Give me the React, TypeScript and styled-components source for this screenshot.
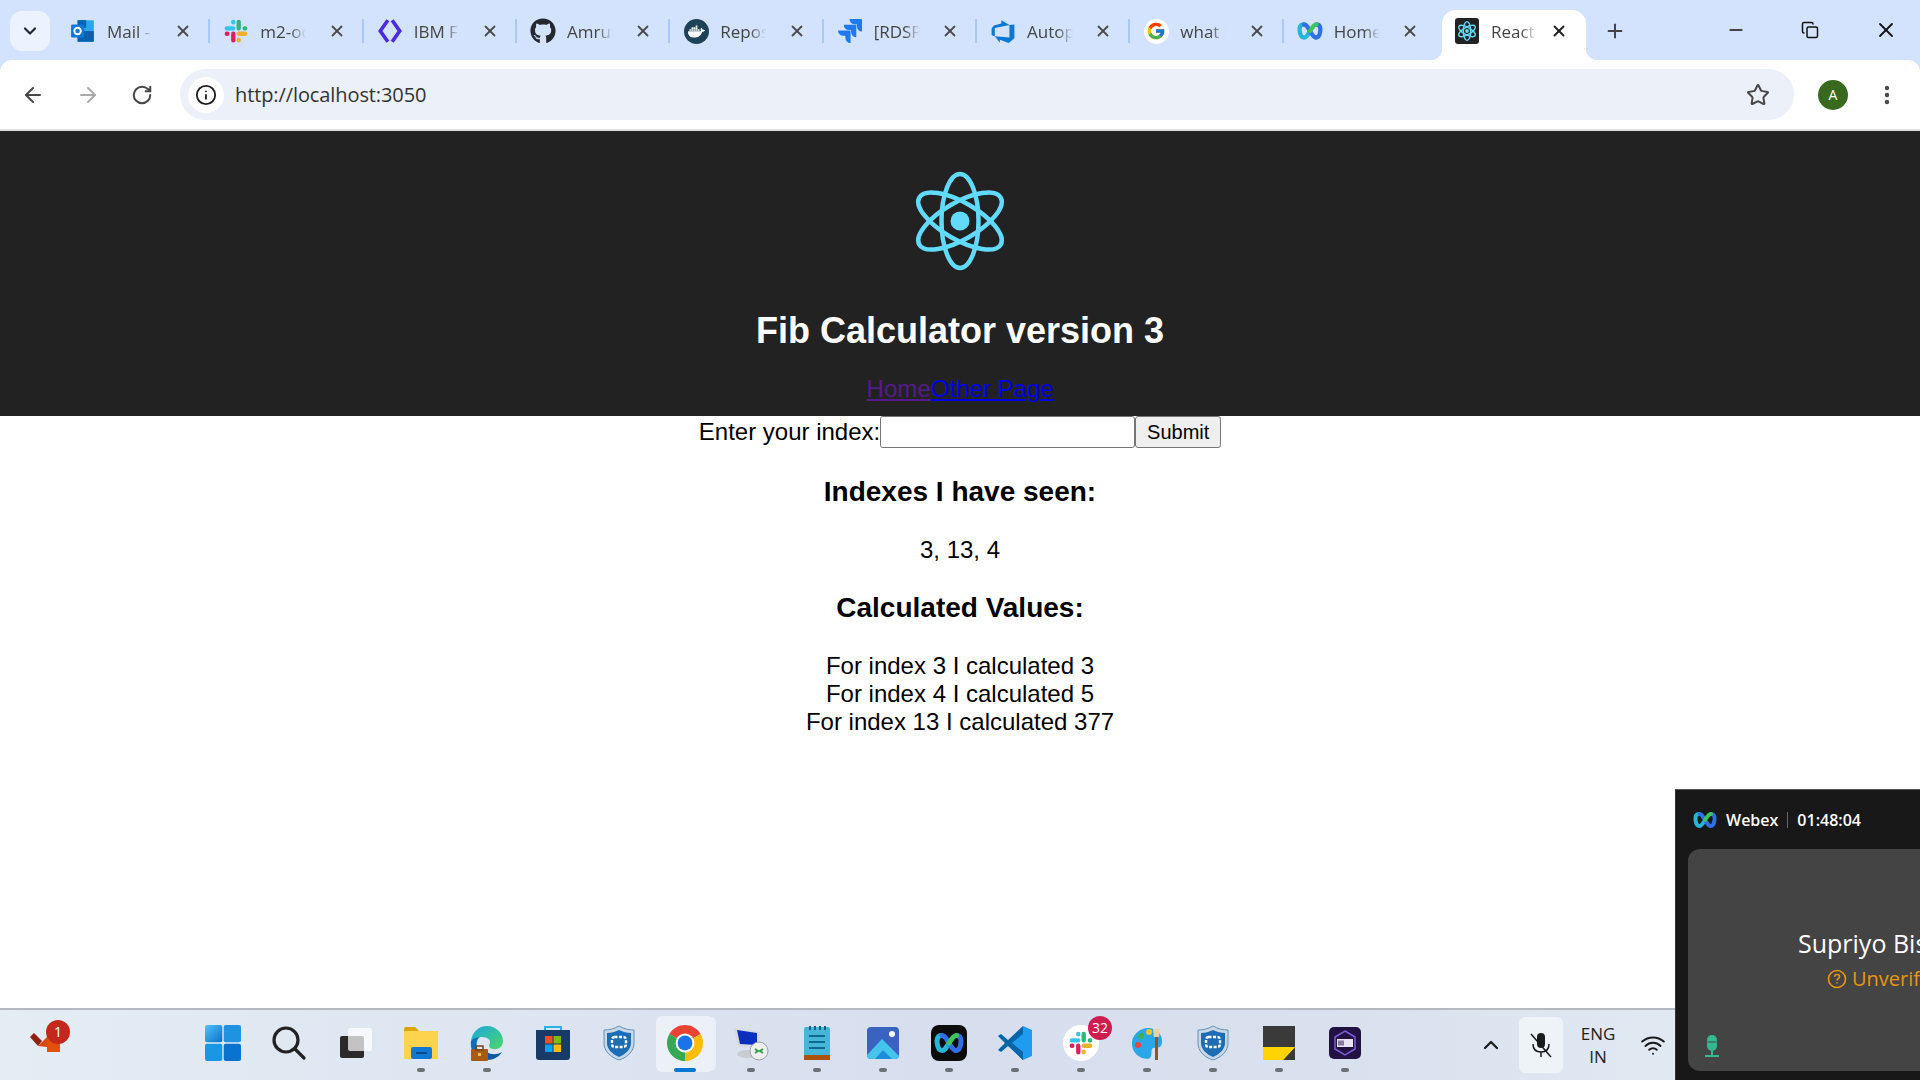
import { ReactNode } from "react";
import styled, { createGlobalStyle } from "styled-components";
import {
  ArrowLeft,
  ArrowRight,
  ChevronDown,
  ChevronUp,
  Copy,
  EllipsisVertical,
  Info,
  Minus,
  Plus,
  RotateCw,
  Star,
  Wifi,
  X,
} from "lucide-react";
import { FaGithub } from "react-icons/fa";
import { FcGoogle } from "react-icons/fc";
import { SiDocker, SiJira } from "react-icons/si";
import { VscAzureDevops } from "react-icons/vsc";

const GlobalStyle = createGlobalStyle`
  html, body {
    margin: 0;
    height: 1080px;
    overflow: hidden;
    background: #fff;
  }
  #root {
    height: 100%;
  }
`;

// drawn icons
const OutlookIcon = () => (
  <svg width="26" height="26" viewBox="0 0 24 24">
    <rect x="7" y="2" width="15" height="20" rx="1" fill="#28a8ea" />
    <rect x="7" y="2" width="8" height="7" fill="#0364b8" />
    <path d="M7 12l15 0v9a1 1 0 0 1-1 1H7z" fill="#0a5fb0" />
    <rect x="1" y="6" width="12" height="12" rx="1" fill="#0f78d4" />
    <circle cx="7" cy="12" r="3" fill="none" stroke="#fff" strokeWidth="1.8" />
  </svg>
);

const SlackIcon = ({ size = 26 }: { size?: number }) => (
  <svg width={size} height={size} viewBox="0 0 24 24" fill="none" strokeWidth="4" strokeLinecap="round">
    <path d="M3.5 9.5h6M9.5 3.5v.5" stroke="#36c5f0" />
    <path d="M14.5 3.5v6M20.5 9.5h-.5" stroke="#2eb67d" />
    <path d="M14.5 14.5h6M14.5 20.5V20" stroke="#ecb22e" />
    <path d="M9.5 14.5v6M3.5 14.5H4" stroke="#e01e5a" />
  </svg>
);

const IbmIcon = () => (
  <svg width="26" height="28" viewBox="0 0 24 26" fill="none" stroke="#4b2be0" strokeWidth="3.4">
    <path d="M10 3L3 13l7 10" />
    <path d="M14 3l7 10-7 10" />
  </svg>
);

const DockerIcon = () => (
  <DockerDisc>
    <SiDocker size={17} color="#fff" />
  </DockerDisc>
);

const GoogleIcon = () => (
  <GoogleDisc>
    <FcGoogle size={20} />
  </GoogleDisc>
);

const WebexIcon = ({ size = 26 }: { size?: number }) => (
  <svg width={size} height={size} viewBox="0 0 24 24" fill="none" strokeWidth="4" strokeLinecap="round">
    <path d="M6 6C3 6 2 9 2.500 12c.5 4 2 6 4 6s3-2 5.500-6" stroke="#27b5d8" />
    <path d="M18 6c3 0 4 3 3.500 6-.5 4-2 6-4 6" stroke="#2f6fe8" />
    <path d="M6.500 6c2.500 0 3.500 3 5.500 6s3 6 5.500 6" stroke="#2f6fe8" />
    <path d="M12 12c2-3 3.500-6 6-6" stroke="#3fc45a" />
  </svg>
);

const ReactAtom = ({ size, stroke }: { size: number; stroke: number }) => (
  <svg width={size} height={size} viewBox="0 0 120 120" fill="none" stroke="#61dafb" strokeWidth={stroke}>
    <ellipse cx="60" cy="60" rx="18.500" ry="47" />
    <ellipse cx="60" cy="60" rx="18.500" ry="47" transform="rotate(60 60 60)" />
    <ellipse cx="60" cy="60" rx="18.500" ry="47" transform="rotate(120 60 60)" />
    <circle cx="60" cy="60" r="9.500" fill="#61dafb" stroke="none" />
  </svg>
);

const TasksIcon = () => (
  <svg width="36" height="36" viewBox="0 0 36 36">
    <path d="M0 13l4-4 8 8-4 5z" fill="#8f2114" />
    <path d="M8 22l12-12 5 5-8 8z" fill="#d9480f" />
    <rect x="17" y="15" width="13" height="13" fill="#e2510c" />
  </svg>
);

const StartIcon = () => (
  <svg width="36" height="36" viewBox="0 0 36 36">
    <defs>
      <linearGradient id="start" x1="0" y1="0" x2="1" y2="1">
        <stop offset="0" stopColor="#4fc5fb" />
        <stop offset="1" stopColor="#0a6fc8" />
      </linearGradient>
    </defs>
    <rect x="0" y="0" width="17.300" height="17.300" rx="2" fill="url(#start)" />
    <rect x="18.700" y="0" width="17.300" height="17.300" rx="2" fill="#1f93e0" />
    <rect x="0" y="18.700" width="17.300" height="17.300" rx="2" fill="#1a97e4" />
    <rect x="18.700" y="18.700" width="17.300" height="17.300" rx="2" fill="#0a72cf" />
  </svg>
);

const SearchIcon = () => (
  <svg width="36" height="36" viewBox="0 0 36 36" fill="none" stroke="#222" strokeWidth="3.200" strokeLinecap="round">
    <circle cx="15" cy="15" r="12" />
    <path d="M24 24l9 9" />
  </svg>
);

const TaskViewIcon = () => (
  <svg width="36" height="36" viewBox="0 0 36 36">
    <rect x="3" y="11" width="24" height="22" rx="2" fill="#2a2a2a" />
    <rect x="11" y="3" width="24" height="23" rx="2" fill="#fff" fillOpacity="0.72" />
  </svg>
);

const ExplorerIcon = () => (
  <svg width="36" height="36" viewBox="0 0 36 36">
    <path d="M1 4a2 2 0 0 1 2-2h9l4 4h19v4H1z" fill="#e0a40a" />
    <rect x="1" y="6" width="34" height="28" rx="1" fill="#fdd34d" />
    <rect x="8" y="22" width="21" height="12" rx="2" fill="#0f78d4" />
    <rect x="13" y="27" width="11" height="2" fill="#064a8c" />
  </svg>
);

const EdgeIcon = () => (
  <svg width="38" height="38" viewBox="0 0 36 36">
    <defs>
      <linearGradient id="edge" x1="0" y1="0" x2="1" y2="1">
        <stop offset="0" stopColor="#1aa7e0" />
        <stop offset="1" stopColor="#4cd868" />
      </linearGradient>
    </defs>
    <path d="M2 16C3 7 10 1 18 1c9 0 16 7 16 15 0 6-5 9-10 8-3 0-5-3-3-6 1-3-3-6-8-6-5 0-9 2-11 4z" fill="url(#edge)" />
    <path d="M2 16c2-3 6-4 9-4-3 2-4 6-3 10l2 12C5 32 1 24 2 16z" fill="#0f6cbd" />
    <path d="M14 34c5 2 14 1 19-7-5 3-11 3-15 0z" fill="#0c59a4" />
    <rect x="2" y="24" width="17" height="12" rx="1" fill="#a85a12" />
    <rect x="7" y="21" width="7" height="4" fill="none" stroke="#7a4410" strokeWidth="1.500" />
    <rect x="9" y="28" width="3" height="3" fill="#f2c14e" />
  </svg>
);

const StoreIcon = () => (
  <svg width="36" height="36" viewBox="0 0 36 36">
    <path d="M10 6V2h16v4" fill="none" stroke="#28b3e8" strokeWidth="2" />
    <path d="M1 5h34v27a3 3 0 0 1-3 3H4a3 3 0 0 1-3-3z" fill="#183a66" />
    <rect x="10" y="11" width="7.500" height="7.500" fill="#f25022" />
    <rect x="18.500" y="11" width="7.500" height="7.500" fill="#7fba00" />
    <rect x="10" y="19.500" width="7.500" height="7.500" fill="#00a4ef" />
    <rect x="18.500" y="19.500" width="7.500" height="7.500" fill="#ffb900" />
  </svg>
);

const ShieldIcon = () => (
  <svg width="36" height="36" viewBox="0 0 36 36">
    <path d="M18 1c5 3 10 4 15 4v13c0 8-6 14-15 17C9 32 3 26 3 18V5c5 0 10-1 15-4z" fill="#c9d8e6" stroke="#4a7ea8" strokeWidth="0.800" />
    <path d="M18 5c4 2 8 3 12 3v10c0 6-5 11-12 14C11 29 6 24 6 18V8c4 0 8-1 12-3z" fill="#1d6db5" />
    <rect x="11" y="12" width="14" height="10" rx="2.500" fill="none" stroke="#fff" strokeWidth="2.400" strokeDasharray="3 1.500" />
  </svg>
);

const ChromeIcon = () => (
  <svg width="40" height="40" viewBox="4 4 40 40">
    <path d="M24 24L6.680 14A20 20 0 0 1 41.320 14z" fill="#ea4335" />
    <path d="M24 24L41.320 14A20 20 0 0 1 24 44z" fill="#fbbc04" />
    <path d="M24 24V44A20 20 0 0 1 6.680 14z" fill="#34a853" />
    <circle cx="24" cy="24" r="10.500" fill="#fff" />
    <circle cx="24" cy="24" r="8.200" fill="#1a73e8" />
  </svg>
);

const RemoteIcon = () => (
  <svg width="36" height="36" viewBox="0 0 36 36">
    <ellipse cx="14" cy="29" rx="10" ry="4" fill="#c9cdd2" />
    <path d="M1 3l26 4v16L5 22z" fill="#d6dae0" />
    <path d="M4 5l20 3v12L7 19z" fill="#0a2fc0" />
    <circle cx="26" cy="26" r="9" fill="#eef0f0" stroke="#9aa0a6" />
    <path d="M22 24l3 2-3 2M30 24l-3 2 3 2" fill="none" stroke="#2f9e44" strokeWidth="1.800" />
  </svg>
);

const NotepadIcon = () => (
  <svg width="36" height="36" viewBox="0 0 36 36">
    <rect x="5" y="2" width="26" height="32" rx="2" fill="#45b6d8" />
    <rect x="5" y="30" width="26" height="5" fill="#a8530f" />
    <path d="M11 1v4M16 1v4M21 1v4M26 1v4" stroke="#14607d" strokeWidth="2" />
    <path d="M10 11h16M10 17h16M10 23h16" stroke="#0e6a8c" strokeWidth="2" />
  </svg>
);

const PhotosIcon = () => (
  <svg width="36" height="36" viewBox="0 0 36 36">
    <rect x="2" y="2" width="32" height="32" rx="4" fill="#3a62c0" />
    <circle cx="27" cy="9" r="3" fill="#fff" />
    <path d="M2 30l15-16 17 17a4 4 0 0 1-4 3H6a4 4 0 0 1-4-4z" fill="#45c4ee" />
    <path d="M10 34l8-9 9 9z" fill="#1d8fd8" />
  </svg>
);

const WebexTile = () => (
  <DarkTile>
    <WebexIcon size={30} />
  </DarkTile>
);

const VsCodeIcon = () => (
  <svg width="36" height="36" viewBox="0 0 36 36">
    <path d="M26 1l9 4v26l-9 4L11 20l15-13z" fill="#1f9cf0" />
    <path d="M26 1L11 15 4 9 1 11l7 7-7 7 3 2 7-6 15 14v-8L15 18 26 9z" fill="#0065a9" />
  </svg>
);

const SlackTile = () => (
  <WhiteDisc>
    <SlackIcon size={26} />
  </WhiteDisc>
);

const PaintIcon = () => (
  <svg width="36" height="36" viewBox="0 0 36 36">
    <path d="M3 20C2 9 12 2 21 3c8 1 13 8 12 15-1 6-6 4-9 5-3 2 0 6-3 10-5 3-17-2-18-13z" fill="#2aa7e8" />
    <circle cx="9" cy="20" r="3" fill="#e8453c" />
    <circle cx="12" cy="11" r="3" fill="#3fb14a" />
    <circle cx="20" cy="7" r="3" fill="#f7c325" />
    <rect x="26" y="11" width="3" height="24" fill="#8a5a20" />
    <path d="M24 4h7l-1 8h-5z" fill="#e8d3a0" />
  </svg>
);

const StickyIcon = () => (
  <svg width="36" height="36" viewBox="0 0 36 36">
    <rect x="2" y="1" width="32" height="34" fill="#3a3a3a" />
    <path d="M2 35V22h20V35zM22 35V22h12z" fill="#ffd400" />
    <path d="M22 35l12-13H22z" fill="#ffd400" />
  </svg>
);

const BarcodeIcon = () => (
  <svg width="36" height="36" viewBox="0 0 36 36">
    <rect x="2" y="2" width="32" height="32" rx="5" fill="#221244" />
    <path d="M18 6l10 6v12l-10 6-10-6V12z" fill="none" stroke="#7c5cd6" strokeWidth="1.500" />
    <rect x="10" y="14" width="16" height="8" fill="#e8e4f2" />
    <path d="M12 15.500v5M14 15.500v5M16 15.500v5" stroke="#221244" />
  </svg>
);

const MutedMic = () => (
  <svg width="26" height="28" viewBox="0 0 26 28">
    <rect x="9" y="2" width="8" height="15" rx="4" fill="#1a1a1a" />
    <path d="M5 13c0 5 3 8 8 8s8-3 8-8M13 21v5" fill="none" stroke="#1a1a1a" strokeWidth="1.500" />
    <path d="M3 3l20 23" stroke="#1a1a1a" strokeWidth="1.500" />
  </svg>
);

const GreenMic = () => (
  <svg width="16" height="22" viewBox="0 0 16 22">
    <rect x="3" y="0" width="10" height="16" rx="5" fill="#33b98f" />
    <path d="M3.500 7h9" stroke="#444" strokeWidth="1" />
    <path d="M8 16v4M1 21h14" stroke="#33b98f" strokeWidth="2" />
  </svg>
);

const QuestionRing = () => (
  <svg width="20" height="20" viewBox="0 0 20 20" fill="none" stroke="#e8960c" strokeWidth="1.600">
    <circle cx="10" cy="10" r="8.500" />
    <path d="M7.700 7.800c0-3 4.800-3 4.800 0 0 1.800-2.500 1.800-2.500 3.700M10 13.300v1.300" />
  </svg>
);

type TabData = { icon: ReactNode; title: string };

const tabs: TabData[] = [
  { icon: <OutlookIcon />, title: "Mail - " },
  { icon: <SlackIcon />, title: "m2-oc" },
  { icon: <IbmIcon />, title: "IBM F" },
  { icon: <FaGithub size={26} color="#24292f" />, title: "Amrut" },
  { icon: <DockerIcon />, title: "Repos" },
  { icon: <SiJira size={24} color="#1f7af0" />, title: "[RDSP" },
  { icon: <VscAzureDevops size={27} color="#0a78d4" />, title: "Autop" },
  { icon: <GoogleIcon />, title: "what i" },
  { icon: <WebexIcon />, title: "Home" },
];

type DockItem = { icon: ReactNode; running?: boolean; active?: boolean; badge?: string };

const dock: DockItem[] = [
  { icon: <StartIcon /> },
  { icon: <SearchIcon /> },
  { icon: <TaskViewIcon /> },
  { icon: <ExplorerIcon />, running: true },
  { icon: <EdgeIcon />, running: true },
  { icon: <StoreIcon /> },
  { icon: <ShieldIcon /> },
  { icon: <ChromeIcon />, active: true },
  { icon: <RemoteIcon />, running: true },
  { icon: <NotepadIcon />, running: true },
  { icon: <PhotosIcon />, running: true },
  { icon: <WebexTile />, running: true },
  { icon: <VsCodeIcon />, running: true },
  { icon: <SlackTile />, running: true, badge: "32" },
  { icon: <PaintIcon />, running: true },
  { icon: <ShieldIcon />, running: true },
  { icon: <StickyIcon />, running: true },
  { icon: <BarcodeIcon />, running: true },
];

export default function App() {
  return (
    <Screen>
      <GlobalStyle />
      <BrowserFrame>
        <TabStrip>
          <TabSearch>
            <ChevronDown size={20} strokeWidth={2.6} color="#1f2937" />
          </TabSearch>
          <TabRow>
            {tabs.map((tab, i) => (
              <Tab key={tab.title} $divider={i < tabs.length - 1}>
                <Favicon>{tab.icon}</Favicon>
                <TabTitle>{tab.title}</TabTitle>
                <X size={18} strokeWidth={2.4} color="#4a4a4a" />
              </Tab>
            ))}
            <ActiveTab>
              <Favicon>
                <ReactFavicon>
                  <ReactAtom size={24} stroke={7} />
                </ReactFavicon>
              </Favicon>
              <TabTitle>React</TabTitle>
              <X size={18} strokeWidth={2.6} color="#222" />
            </ActiveTab>
          </TabRow>
          <NewTab>
            <Plus size={22} strokeWidth={2.2} color="#444" />
          </NewTab>
          <WindowControls>
            <Minus size={20} strokeWidth={2} color="#111" />
            <Copy size={18} strokeWidth={2} color="#111" />
            <X size={24} strokeWidth={1.8} color="#111" />
          </WindowControls>
        </TabStrip>
        <Toolbar>
          <NavButtons>
            <ArrowLeft size={24} strokeWidth={2} color="#474747" />
            <ArrowRight size={24} strokeWidth={2} color="#aaa" />
            <RotateCw size={22} strokeWidth={2.2} color="#474747" />
          </NavButtons>
          <Omnibox>
            <SiteInfo>
              <Info size={22} strokeWidth={2} color="#1f1f1f" />
            </SiteInfo>
            <Url>http://localhost:3050</Url>
            <Star size={24} strokeWidth={2} color="#474747" />
          </Omnibox>
          <Avatar>A</Avatar>
          <EllipsisVertical size={24} strokeWidth={2.4} color="#474747" />
        </Toolbar>
      </BrowserFrame>

      <Page>
        <AppHeader>
          <LogoSlot>
            <ReactAtom size={120} stroke={4.5} />
          </LogoSlot>
          <AppTitle>Fib Calculator version 3</AppTitle>
          <NavLink href="#home" $visited>
            Home
          </NavLink>
          <NavLink href="#other">Other Page</NavLink>
        </AppHeader>
        <IndexForm onSubmit={(e) => e.preventDefault()}>
          <label htmlFor="index">Enter your index:</label>
          <IndexInput id="index" />
          <SubmitButton>Submit</SubmitButton>
        </IndexForm>
        <SectionTitle>Indexes I have seen:</SectionTitle>
        <div>3, 13, 4</div>
        <SectionTitle>Calculated Values:</SectionTitle>
        <div>For index 3 I calculated 3</div>
        <div>For index 4 I calculated 5</div>
        <div>For index 13 I calculated 377</div>
      </Page>

      <Taskbar>
        <TasksSlot>
          <TasksIcon />
          <TasksBadge>1</TasksBadge>
        </TasksSlot>
        <Dock>
          {dock.map((item, i) => (
            <DockSlot key={i} $active={item.active}>
              <DockIcon>
                {item.icon}
                {item.badge && <SlackBadge>{item.badge}</SlackBadge>}
              </DockIcon>
              <RunDot $running={item.running} $active={item.active} />
            </DockSlot>
          ))}
        </Dock>
        <Tray>
          <ChevronUp size={24} strokeWidth={2.2} color="#1a1a1a" />
          <MicButton>
            <MutedMic />
          </MicButton>
          <Lang>
            ENG
            <br />
            IN
          </Lang>
          <Wifi size={26} strokeWidth={1.8} color="#1a1a1a" />
        </Tray>
      </Taskbar>

      <WebexPanel>
        <PanelHead>
          <WebexIcon size={24} />
          <PanelName>Webex</PanelName>
          <PanelDivider />
          <PanelName>01:48:04</PanelName>
        </PanelHead>
        <CallCard>
          <CallerName>Supriyo Bis</CallerName>
          <CallerStatus>
            <QuestionRing />
            Unverifi
          </CallerStatus>
          <CardMic>
            <GreenMic />
          </CardMic>
        </CallCard>
      </WebexPanel>
    </Screen>
  );
}

const Screen = styled.div`
  position: relative;
  height: 1080px;
  display: flex;
  flex-direction: column;
  overflow: hidden;
`;

const BrowserFrame = styled.div`
  background: #d3e3fd;
  font-family: "Open Sans", "Noto Sans", sans-serif;
`;

const TabStrip = styled.div`
  height: 60px;
  display: flex;
`;

const TabSearch = styled.div`
  width: 40px;
  height: 40px;
  margin: 11px 0 0 10px;
  border-radius: 12px;
  background: #ecf2fe;
  display: flex;
  align-items: center;
  justify-content: center;
`;

const TabRow = styled.div`
  display: flex;
  margin: 10px 0 0 7px;
  height: 50px;
`;

const Tab = styled.div<{ $divider?: boolean }>`
  position: relative;
  width: 153.33px;
  box-sizing: border-box;
  display: flex;
  align-items: center;
  padding: 0 18px 8px 13px;

  &::after {
    content: "";
    display: ${(p) => (p.$divider ? "block" : "none")};
    position: absolute;
    right: 0;
    top: 9px;
    width: 2px;
    height: 24px;
    background: #a8c7fa;
  }
`;

const ActiveTab = styled(Tab)`
  width: 144px;
  margin-left: 5px;
  padding-left: 12px;
  background: #fff;
  border-radius: 14px 14px 0 0;

  &::before,
  &::after {
    content: "";
    display: block;
    position: absolute;
    top: auto;
    bottom: 0;
    width: 12px;
    height: 12px;
    background: radial-gradient(circle at 0 0, #d3e3fd 12px, #fff 12.5px);
  }
  &::before {
    left: -12px;
    right: auto;
  }
  &::after {
    right: -12px;
    background: radial-gradient(circle at 100% 0, #d3e3fd 12px, #fff 12.5px);
  }
`;

const Favicon = styled.div`
  width: 26px;
  height: 28px;
  flex: none;
  display: flex;
  align-items: center;
  justify-content: center;
`;

const TabTitle = styled.span`
  width: 46px;
  margin-left: 11px;
  margin-right: auto;
  white-space: nowrap;
  overflow: hidden;
  font-size: 17px;
  color: #444;
  -webkit-mask-image: linear-gradient(90deg, #000 65%, transparent 100%);
  mask-image: linear-gradient(90deg, #000 65%, transparent 100%);
`;

const DockerDisc = styled.div`
  width: 25px;
  height: 25px;
  border-radius: 50%;
  background: #1e4257;
  display: flex;
  align-items: center;
  justify-content: center;
`;

const GoogleDisc = styled.div`
  width: 25px;
  height: 25px;
  border-radius: 50%;
  background: #fff;
  display: flex;
  align-items: center;
  justify-content: center;
`;

const ReactFavicon = styled.div`
  width: 24px;
  height: 26px;
  border-radius: 3px;
  background: #222;
  display: flex;
  align-items: center;
  justify-content: center;
`;

const NewTab = styled.div`
  margin: 20px 0 0 18px;
  height: 22px;
`;

const WindowControls = styled.div`
  width: 172px;
  margin: 18px 22px 0 auto;
  height: 24px;
  display: flex;
  align-items: center;
  justify-content: space-between;
`;

const Toolbar = styled.div`
  height: 69px;
  box-sizing: content-box;
  display: flex;
  align-items: center;
  padding-right: 21px;
  background: #fff;
  border-radius: 12px 12px 0 0;
  border-bottom: 2px solid #dedede;
`;

const NavButtons = styled.div`
  width: 180px;
  box-sizing: border-box;
  padding: 0 27px 0 21px;
  display: flex;
  align-items: center;
  justify-content: space-between;
`;

const Omnibox = styled.div`
  width: 1614px;
  height: 51px;
  box-sizing: border-box;
  margin-right: 24px;
  padding: 0 24px 0 8px;
  border-radius: 26px;
  background: #ecf0f9;
  display: flex;
  align-items: center;
`;

const SiteInfo = styled.div`
  width: 36px;
  height: 36px;
  border-radius: 50%;
  background: #fff;
  display: flex;
  align-items: center;
  justify-content: center;
`;

const Url = styled.span`
  margin: 0 auto 0 11px;
  font-size: 20px;
  letter-spacing: -0.1px;
  color: #333;
`;

const Avatar = styled.div`
  width: 30px;
  height: 30px;
  margin-right: 27px;
  border-radius: 50%;
  background: #38691f;
  color: #fff;
  font-size: 14px;
  display: flex;
  align-items: center;
  justify-content: center;
`;

const Page = styled.main`
  flex: 1;
  min-height: 0;
  overflow: hidden;
  text-align: center;
  font-family: "Liberation Sans", Arial, sans-serif;
  font-size: 24px;
  color: #000;
`;

const AppHeader = styled.header`
  height: 285px;
  box-sizing: border-box;
  padding-top: 30px;
  background: #222;
  color: #fff;
`;

const LogoSlot = styled.div`
  height: 120px;
`;

const AppTitle = styled.h1`
  margin: 29px 0 24px;
  font-size: 36px;
  line-height: 41px;
  font-weight: 700;
`;

const NavLink = styled.a<{ $visited?: boolean }>`
  color: ${(p) => (p.$visited ? "#551a8b" : "#0000ee")};
  text-decoration: underline;
`;

const IndexForm = styled.form`
  height: 32px;
  display: flex;
  align-items: center;
  justify-content: center;
`;

const IndexInput = styled.input`
  width: 255px;
  height: 32px;
  box-sizing: border-box;
  padding: 0 3px;
  border: 1.5px solid #767676;
  border-radius: 3px;
  background: #fff;
`;

const SubmitButton = styled.button`
  width: 86px;
  height: 32px;
  box-sizing: border-box;
  padding: 0;
  border: 1.5px solid #767676;
  border-radius: 3px;
  background: #efefef;
  font-family: "Liberation Sans", Arial, sans-serif;
  font-size: 20px;
  color: #000;
`;

const SectionTitle = styled.h3`
  margin: 28px 0;
  font-size: 28px;
  line-height: 32px;
  font-weight: 700;
`;

const Taskbar = styled.footer`
  height: 72px;
  box-sizing: border-box;
  flex: none;
  display: flex;
  border-top: 2px solid #b4b9c1;
  background: linear-gradient(90deg, #e4edf4 0%, #dde6f1 25%, #d7deee 50%, #d9e1ee 70%, #e6eef6 100%);
  font-family: "Open Sans", "Noto Sans", sans-serif;
`;

const TasksSlot = styled.div`
  position: relative;
  width: 36px;
  height: 36px;
  margin: 14px 124px 0 30px;
`;

const TasksBadge = styled.span`
  position: absolute;
  top: -4px;
  left: 16px;
  width: 24px;
  height: 24px;
  border-radius: 50%;
  background: #c4281c;
  color: #fff;
  font-size: 14px;
  line-height: 24px;
  text-align: center;
`;

const Dock = styled.div`
  display: flex;
`;

const DockSlot = styled.div<{ $active?: boolean }>`
  width: 66px;
  display: flex;
  flex-direction: column;
  align-items: center;
  position: relative;

  ${(p) =>
    p.$active &&
    `
    &::before {
      content: "";
      position: absolute;
      top: 6px;
      left: 4px;
      width: 58px;
      height: 56px;
      border-radius: 6px;
      background: #ecf0f9;
      box-shadow: 3px 0 0 -1px #e8edf7;
    }
  `}
`;

const DockIcon = styled.div`
  position: relative;
  width: 36px;
  height: 36px;
  margin-top: 15px;
  display: flex;
  align-items: center;
  justify-content: center;
`;

const RunDot = styled.span<{ $running?: boolean; $active?: boolean }>`
  position: relative;
  width: ${(p) => (p.$active ? "22px" : "8px")};
  height: 4px;
  margin-top: 7px;
  border-radius: 2px;
  background: ${(p) =>
    p.$active ? "#0078d4" : p.$running ? "#6d7278" : "transparent"};
`;

const DarkTile = styled.div`
  width: 36px;
  height: 36px;
  border-radius: 8px;
  background: #0c0c0c;
  display: flex;
  align-items: center;
  justify-content: center;
`;

const WhiteDisc = styled.div`
  width: 36px;
  height: 36px;
  border-radius: 50%;
  background: #fff;
  display: flex;
  align-items: center;
  justify-content: center;
`;

const SlackBadge = styled.span`
  position: absolute;
  top: -9px;
  right: -13px;
  width: 24px;
  height: 24px;
  border-radius: 50%;
  background: #cf1d50;
  color: #fff;
  font-size: 14px;
  line-height: 24px;
  text-align: center;
`;

const Tray = styled.div`
  margin-left: auto;
  padding-right: 254px;
  display: flex;
  align-items: center;
`;

const MicButton = styled.div`
  width: 44px;
  height: 56px;
  margin-left: 16px;
  border-radius: 6px;
  background: #eef3f8;
  display: flex;
  align-items: center;
  justify-content: center;
`;

const Lang = styled.div`
  width: 60px;
  margin: 0 12px 0 5px;
  font-size: 17px;
  line-height: 23px;
  text-align: center;
  color: #222;
`;

const WebexPanel = styled.aside`
  position: absolute;
  left: 1675px;
  top: 789px;
  width: 400px;
  bottom: 0;
  box-sizing: border-box;
  padding: 0 12px 9px;
  display: flex;
  flex-direction: column;
  background: #181818;
  border-top: 1px solid #555;
  border-left: 1px solid #333;
  font-family: "Open Sans", "Noto Sans", sans-serif;
`;

const PanelHead = styled.div`
  height: 59px;
  display: flex;
  align-items: center;
  gap: 9px;
  padding-left: 5px;
`;

const PanelName = styled.span`
  color: #fff;
  font-size: 16px;
  font-weight: 600;
`;

const PanelDivider = styled.span`
  width: 1px;
  height: 16px;
  background: #666;
`;

const CallCard = styled.div`
  flex: 1;
  position: relative;
  width: 400px;
  box-sizing: border-box;
  padding: 78px 0 0 110px;
  border-radius: 12px;
  background: #444;
  color: #fff;
`;

const CallerName = styled.div`
  font-size: 25px;
  line-height: 32px;
  white-space: nowrap;
`;

const CallerStatus = styled.div`
  margin: 7px 0 0 29px;
  display: flex;
  align-items: center;
  gap: 5px;
  font-size: 20px;
  line-height: 26px;
  color: #e8960c;
`;

const CardMic = styled.div`
  position: absolute;
  left: 16px;
  bottom: 9px;
`;
